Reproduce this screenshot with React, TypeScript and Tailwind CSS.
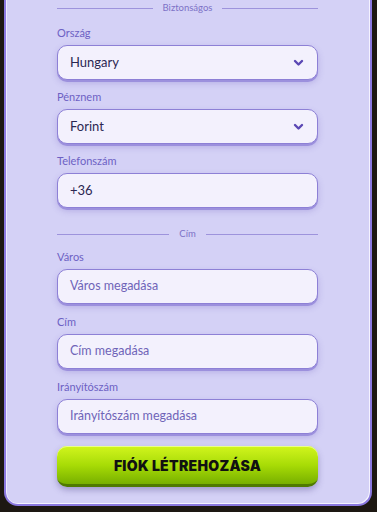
import React from "react";

const font = { fontFamily: "Lato, 'Noto Sans', sans-serif" };

function Divider({ label }: { label: string }) {
    return (
        <div className="flex items-center gap-[10px] h-[12px]">
            <div className="flex-1 h-px bg-[#9d93dc]" />
            <span className="text-[9.5px] leading-[12px] text-[#7d72c6]">{label}</span>
            <div className="flex-1 h-px bg-[#9d93dc]" />
        </div>
    );
}

function Field({ label, value, placeholder, select }: { label: string; value?: string; placeholder?: string; select?: boolean }) {
    return (
        <div className="flex flex-col">
            <label className="text-[11px] leading-[14px] mb-[5px] text-[#6d61c4]">{label}</label>
            <div className="h-[35px] rounded-[10px] border border-[#8d80d6] bg-[#f3f1fd] shadow-[0_2px_0_#9c90dd,0_3px_6px_rgba(90,70,180,0.25)] flex items-center px-[12px]">
                {value ? (
                    <span className="flex-1 text-[13px] text-[#2b2752]">{value}</span>
                ) : (
                    <span className="flex-1 text-[12.5px] text-[#6f64b8]">{placeholder}</span>
                )}
                {select && (
                    <svg width="11" height="8" viewBox="0 0 11 8" className="mr-[1px]">
                        <path d="M2 2 L5.5 5.5 L9 2" fill="none" stroke="#5a47b4" strokeWidth="2.4" strokeLinecap="round" strokeLinejoin="round" />
                    </svg>
                )}
            </div>
        </div>
    );
}

export default function App() {
    return (
        <main className="w-[377px] h-[512px] overflow-hidden bg-[#1d1812]" style={font}>
            <div className="ml-[4px] w-[368px] rounded-b-[14px] border-x-2 border-b-2 border-[#8a78df] bg-[#d4d1f6] shadow-[inset_-1px_-1px_0_#f4f2ff,inset_1px_0_0_#eeeaff] pt-[2px] pb-[17px] pl-[51px] pr-[52px]">
                <Divider label="Biztonságos" />
                <div className="flex flex-col gap-[10px] mt-[12px]">
                    <Field label="Ország" value="Hungary" select />
                    <Field label="Pénznem" value="Forint" select />
                    <Field label="Telefonszám" value="+36" />
                </div>
                <div className="mt-[20px]">
                    <Divider label="Cím" />
                </div>
                <div className="flex flex-col gap-[11px] mt-[10px]">
                    <Field label="Város" placeholder="Város megadása" />
                    <Field label="Cím" placeholder="Cím megadása" />
                    <Field label="Irányítószám" placeholder="Irányítószám megadása" />
                </div>
                <button className="mt-[12px] w-full h-[41px] rounded-[10px] bg-gradient-to-b from-[#d2f51c] via-[#a8dc06] to-[#78b000] border-b-[3px] border-[#4f7a00] shadow-[0_3px_6px_rgba(60,50,120,0.35),inset_0_1px_0_#eaff8a] flex items-center justify-center">
                    <span className="text-[14px] font-black tracking-[0.3px] text-[#111]" style={{ fontFamily: "Inter, sans-serif" }}>FIÓK LÉTREHOZÁSA</span>
                </button>
            </div>
        </main>
    );
}
